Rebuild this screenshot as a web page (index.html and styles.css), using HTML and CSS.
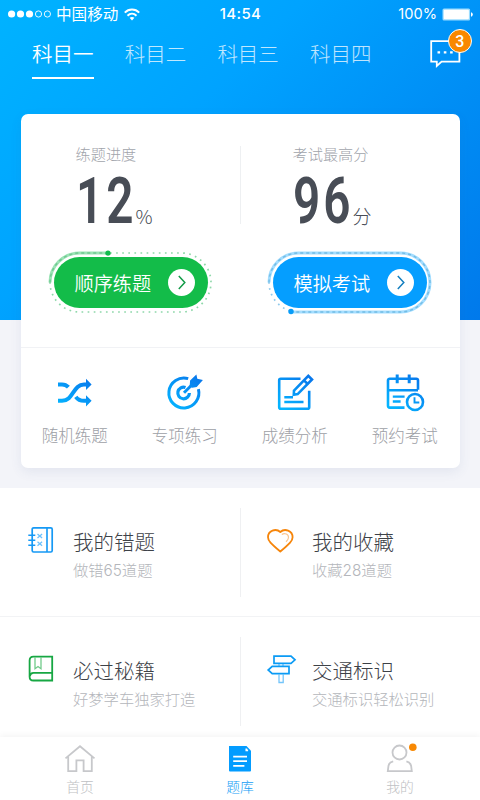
FILE: index.html
```html
<!DOCTYPE html>
<html lang="zh-CN">
<head>
<meta charset="utf-8">
<title>题库</title>
<link rel="stylesheet" href="styles.css">
</head>
<body>
<svg class="defs" width="0" height="0"><defs>
<linearGradient id="blue" gradientUnits="userSpaceOnUse" x1="32" y1="4" x2="8" y2="36"><stop offset="0" stop-color="#0878ec"/><stop offset="1" stop-color="#05b4ff"/></linearGradient>
</defs></svg>
<div class="app">
  <header class="hero">
    <div class="status">
      <div class="carrier">
        <svg width="44" height="10" viewBox="0 0 44 10"><g fill="#fff"><circle cx="3.6" cy="5" r="3.6"/><circle cx="12.5" cy="5" r="3.6"/><circle cx="21.5" cy="5" r="3.6"/></g><g fill="none" stroke="#fff" stroke-width=".9"><circle cx="30.5" cy="5" r="3.1"/><circle cx="39.4" cy="5" r="3.1"/></g></svg>
        <span>中国移动</span>
        <svg class="wifi" width="16" height="13" viewBox="0 0 16 13"><g fill="none" stroke="#fff" stroke-width="2"><path d="M.8 4.6C4.8.5 11.2.5 15.2 4.6"/><path d="M3.5 7.7c2.6-2.5 6.4-2.5 9 0"/></g><path d="M5.6 9.8c1.4-1.2 3.4-1.2 4.8 0L8 12.4z" fill="#fff"/></svg>
      </div>
      <span class="time">14:54</span>
      <div class="battery"><span>100%</span>
        <svg width="31" height="13" viewBox="0 0 31 13"><rect x=".5" y=".5" width="27.6" height="12" rx="1.5" fill="#9bdcff"/><rect x="1.7" y="1.7" width="25.2" height="9.6" rx="1" fill="#fff"/><path d="M29 4.2q1.8.4 1.8 2.3T29 8.8z" fill="#fff"/></svg>
      </div>
    </div>
    <nav class="subjects">
      <span class="subject active">科目一</span><span class="subject">科目二</span><span class="subject">科目三</span><span class="subject">科目四</span>
      <div class="message">
        <svg width="32" height="28" viewBox="0 0 32 28"><path d="M1.2 1.2h28.2v20.5H11.6L6.8 26v-4.3H1.2z" fill="none" stroke="#fff" stroke-width="1.8"/><path d="M7.5 11.2h2.6v2.4H7.5zM13.8 11.2h2.6v2.4h-2.6zM20.1 11.2h2.6v2.4h-2.6z" fill="#fff"/></svg>
        <b class="badge">3</b>
      </div>
    </nav>
  </header>

  <section class="card">
    <div class="stats">
      <div class="stat">
        <div class="label">练题进度</div>
        <div class="value"><b>12</b><i>%</i></div>
      </div>
      <div class="stat right">
        <div class="label">考试最高分</div>
        <div class="value"><b>96</b><i>分</i></div>
      </div>
    </div>
    <div class="actions">
      <div class="ring green">
        <svg class="track" width="163" height="61" viewBox="0 0 163 61" fill="none"><rect x="1" y="1" width="161" height="59" rx="29.5" stroke="#8fd8aa" stroke-width="1.7" stroke-dasharray="1.7 4.4"/><path d="M1 30.5A29.5 29.5 0 0 1 30.5 1H59" stroke="#9be3b5" stroke-width="3"/><path d="M1 30.5A29.5 29.5 0 0 1 30.5 1H59" stroke="#6fc890" stroke-width="1.4" stroke-dasharray="3 3"/><circle cx="59" cy="1.2" r="2.6" fill="#11bc4d"/></svg>
        <div class="pill"><span>顺序练题</span><svg width="27" height="27" viewBox="0 0 27 27"><circle cx="13.5" cy="13.5" r="13.5" fill="#fff"/><path d="M10.8 7l6 6.5-6 6.5" fill="none" stroke="#139b48" stroke-width="1.5"/></svg></div>
      </div>
      <div class="ring blue">
        <svg class="track" width="163" height="61" viewBox="0 0 163 61" fill="none"><rect x="1" y="1" width="161" height="59" rx="29.5" stroke="#8fc9ec" stroke-width="1.7" stroke-dasharray="1.7 4.4"/><path d="M1 30.5A29.5 29.5 0 0 1 30.5 1h102a29.5 29.5 0 0 1 0 59H23" stroke="#a3ddff" stroke-width="3"/><path d="M1 30.5A29.5 29.5 0 0 1 30.5 1h102a29.5 29.5 0 0 1 0 59H23" stroke="#73bce4" stroke-width="1.4" stroke-dasharray="3 3"/><circle cx="23" cy="59.5" r="2.7" fill="#079cf8"/></svg>
        <div class="pill"><span>模拟考试</span><svg width="27" height="27" viewBox="0 0 27 27"><circle cx="13.5" cy="13.5" r="13.5" fill="#fff"/><path d="M10.8 7l6 6.5-6 6.5" fill="none" stroke="#147fbf" stroke-width="1.5"/></svg></div>
      </div>
    </div>
    <div class="tools">
      <div class="tool">
        <svg width="40" height="40" viewBox="0 0 40 40"><g fill="none" stroke="url(#blue)" stroke-width="4"><path d="M3 12.4h4c2.8 0 4.8 1.1 6.4 2.8M3 28.8h4C18.5 28.8 18 12.4 29 12.4h3M20.8 24.8c2 2.8 4.7 4 8.2 4h3"/></g><path d="M31 6.8l5.6 5.6-5.6 5.6zM31 23.2l5.6 5.6-5.6 5.6z" fill="url(#blue)"/></svg>
        <span>随机练题</span>
      </div>
      <div class="tool">
        <svg width="40" height="40" viewBox="0 0 40 40"><g fill="none" stroke="url(#blue)" stroke-width="3"><path d="M23.2 6.6A15 15 0 1 0 33.4 17.2"/><path d="M20.5 15.5A5.8 5.8 0 1 0 24.4 21" stroke-width="3.2"/><path d="M19 20.8l8-8"/></g><path d="M24.6 14.8l.5-6.2 6.3-6 .9 4.2 5.6 1.3-6.2 6.8-4.4.9z" fill="url(#blue)"/></svg>
        <span>专项练习</span>
      </div>
      <div class="tool">
        <svg width="40" height="40" viewBox="0 0 40 40"><g fill="none" stroke="url(#blue)" stroke-width="2.6"><path d="M25.5 6.7H5.7q-1.5 0-1.5 1.5v27q0 1.5 1.5 1.5h27q1.5 0 1.5-1.5V18.8"/><path d="M19 18.6L33.3 3.8l3.7 3.7-14.3 14.6-3.9.6zM29 8.3l3.7 3.7"/><path d="M9.3 25.2H18M9.3 30h19.2"/></g></svg>
        <span>成绩分析</span>
      </div>
      <div class="tool">
        <svg width="40" height="40" viewBox="0 0 40 40"><g fill="none" stroke="url(#blue)" stroke-width="2.6"><path d="M19.5 35.6H4.8q-1.8 0-1.8-1.8V8.3Q3 6.7 4.8 6.7h26.4q1.8 0 1.8 1.6v9.4M3 18.2h30"/><path d="M12.2 2.5v8.8M24.2 2.5v8.8" stroke-width="3"/><path d="M7.8 24.6h11.8M7.8 29.5h7.8" stroke-width="2.4"/><circle cx="30" cy="30" r="8"/><path d="M29.5 25.2v5.3h4.8" stroke-width="1.9"/></g></svg>
        <span>预约考试</span>
      </div>
    </div>
  </section>

  <main class="entries">
    <div class="entry">
      <svg width="30" height="30" viewBox="0 0 30 30" fill="none" stroke="#1699f5"><rect x="5.2" y="1.8" width="20" height="24.2" rx="1.4" stroke-width="1.7"/><path d="M20 2v24M1.3 9.3h7M1.3 14.2h7M1.3 19.2h7" stroke-width="1.6"/><path d="M10.5 8l4.6 4m0-4l-4.6 4M10.5 15.7l4.6 4m0-4l-4.6 4" stroke="#6ec1fb" stroke-width="1.3"/></svg>
      <div><h2>我的错题</h2><p>做错65道题</p></div>
    </div>
    <div class="entry">
      <svg width="30" height="30" viewBox="0 0 30 30" fill="none"><path d="M14.3 6C9.8 1.9 2 4.7 2 11.2c0 3.4 2.6 6.2 12.3 14.3C24 17.4 26.6 14.6 26.6 11.2 26.6 4.7 18.8 1.9 14.3 6z" stroke="#f6850a" stroke-width="1.8" stroke-linejoin="round"/><path d="M15.8 8.4c3-1.9 7-.3 6.7 3.3-.2 1.7-1.3 2.9-2.5 4" stroke="#fac48e" stroke-width="1.2"/></svg>
      <div><h2>我的收藏</h2><p>收藏28道题</p></div>
    </div>
    <div class="entry">
      <svg width="30" height="30" viewBox="0 0 30 30" fill="none" stroke="#17a743"><path d="M25.2 1.7H6.4Q2.6 1.7 2.6 5.5v16.2q0 3.8 3.8 3.8h18.8zM2.9 21.2q.4-3.4 3.6-3.4h18.7" stroke-width="1.8"/><path d="M8 2v11.8l3-2.2 3 2.2V2" stroke="#72cb8b" stroke-width="1.3"/></svg>
      <div><h2>必过秘籍</h2><p>好梦学车独家打造</p></div>
    </div>
    <div class="entry">
      <svg width="30" height="30" viewBox="0 0 30 30" fill="none"><path d="M13 8.5v3.2m4-3.2v3.2M13 19.5v8h4.2v-8" stroke="#74c5fa" stroke-width="1.3"/><path d="M8 1.2h17l4 3.6-4 3.6H8zM23 11.4H6.2L2.2 15l4 3.6H23z" stroke="#0b9bf5" stroke-width="1.7"/></svg>
      <div><h2>交通标识</h2><p>交通标识轻松识别</p></div>
    </div>
  </main>

  <footer class="tabbar">
    <div class="tab"><svg width="32" height="30" viewBox="0 0 32 30" fill="none" stroke="#c7c8cb" stroke-width="1.8"><path d="M1.5 14.4L16 2.2l14.5 12.2M4.2 12.5v14.7h8.2V16.4h7.2v10.8h8.2V12.5"/></svg><span>首页</span></div>
    <div class="tab on"><svg width="32" height="30" viewBox="0 0 32 30"><path d="M5 2h17.5L27 6.8v19.8q0 1-1 1H6q-1 0-1-1z" fill="#039cff"/><path d="M22.3 4.6V6.4h1.8M9.2 12.7H23M9.2 17.1H23M9.2 21.9h11.2" fill="none" stroke="#fff" stroke-width="1.7"/></svg><span>题库</span></div>
    <div class="tab"><svg width="32" height="30" viewBox="0 0 32 30" fill="none" stroke="#c7c8cb" stroke-width="1.8"><circle cx="15.5" cy="8.5" r="7"/><path d="M9.2 17.3q-4 1-4.7 4.4l-.7 5.5h24l-.7-5.5q-.8-3.4-4.7-4.4"/><circle cx="28.8" cy="3.2" r="3.8" fill="#f88904" stroke="none"/></svg><span>我的</span></div>
  </footer>
</div>
</body>
</html>
```
FILE: styles.css
```css
* { box-sizing: border-box; }
body {
  margin: 0;
  font-family: Inter, "Noto Sans CJK SC", sans-serif;
  font-weight: 300;
}
h2, p { margin: 0; font-weight: 300; }
svg { display: block; flex: none; overflow: visible; }
.defs { position: absolute; }
.app {
  width: 480px;
  height: 800px;
  overflow: hidden;
  display: flex;
  flex-direction: column;
  background: #f3f4f9;
}

.hero {
  flex: none;
  height: 320px;
  color: #fff;
  background: linear-gradient(135deg, #00b3ff 0%, #00a3ff 38%, #0079eb 100%);
}
.status {
  height: 28px;
  padding: 0 7px 0 8px;
  display: grid;
  grid-template-columns: 1fr auto 1fr;
  align-items: center;
  font-size: 15.6px;
  font-weight: 400;
  line-height: 28px;
}
.carrier, .battery { display: flex; align-items: center; height: 28px; }
.carrier span { margin-left: 4px; padding-top: 2px; }
.wifi { margin-left: 6px; }
.time { font-size: 15px; font-weight: 500; letter-spacing: .4px; }
.battery { justify-content: flex-end; gap: 5px; font-size: 14.6px; }
.subjects {
  height: 52px;
  padding-left: 32px;
  display: flex;
  gap: 31px;
  font-size: 20.5px;
  line-height: 54px;
}
.subject { width: 61.7px; height: 51px; white-space: nowrap; opacity: .75; }
.subject.active { opacity: 1; border-bottom: 2px solid #fff; font-weight: 350; }
.message { position: relative; margin: 12px 0 0 27px; height: 28px; }
.badge {
  position: absolute;
  left: 18px;
  top: -11px;
  width: 24px;
  height: 24px;
  border: 1px solid #fff;
  border-radius: 50%;
  background: #f98800;
  font-family: Roboto, sans-serif;
  font-size: 16px;
  font-weight: 500;
  line-height: 24px;
  text-align: center;
}

.card {
  flex: none;
  position: relative;
  width: 439px;
  height: 354px;
  margin: -206px 0 20px 20.5px;
  border-radius: 7px;
  background: #fff;
  box-shadow: 0 4px 12px rgba(65, 85, 145, .09);
}
.stats { height: 138px; padding-top: 32px; display: grid; grid-template-columns: 220px 219px; }
.stat { height: 78px; padding-left: 55px; }
.stat.right { padding-left: 52px; border-left: 1px solid #eef0f2; margin-left: -1px; }
.label { font-size: 15.2px; line-height: 18px; color: #a1a4ab; }
.value { height: 64px; display: flex; align-items: flex-end; color: #484d56; }
.value b {
  width: 60px;
  font-family: Roboto, sans-serif;
  font-size: 64px;
  font-weight: 600;
  line-height: 52px;
  height: 52px;
  letter-spacing: 4px;
  transform: scaleX(.745);
  transform-origin: 0 50%;
}
.value i { font-family: "Noto Sans CJK SC", sans-serif; font-weight: 200; font-style: normal; font-size: 19px; line-height: 24px; height: 24px; }
.actions { height: 95px; padding-left: 28px; display: flex; gap: 56px; }
.ring { position: relative; width: 163px; height: 61px; padding: 5px; }
.track { position: absolute; left: 0; top: 0; }
.pill {
  width: 154px;
  height: 51px;
  padding: 0 13px 0 21px;
  border-radius: 26px;
  display: flex;
  align-items: center;
  justify-content: space-between;
  color: #fff;
  font-size: 19.2px;
  font-weight: 350;
}
.green .pill { background: #13bc49; }
.blue .pill { background: #059eff; }
.tools {
  height: 121px;
  padding-top: 24px;
  border-top: 1px solid #f1f2f5;
  display: grid;
  grid-template-columns: repeat(4, 110px);
}
.tool { display: flex; flex-direction: column; align-items: center; font-size: 16.5px; color: #9da0a6; margin-left: -1.5px; }
.tool span { line-height: 24px; margin-top: 12px; }

.entries {
  flex: none;
  height: 249px;
  display: grid;
  grid-template-columns: 240px 240px;
  grid-template-rows: 129px 128px;
  background: #fff;
}
.entry { position: relative; display: flex; padding: 38px 0 0 27px; gap: 16px; border-bottom: 1px solid #f2f3f5; }
.entry > div { padding-top: 2px; }
.entry:nth-child(even) { padding-left: 26px; }
.entry:nth-child(even)::before {
  content: "";
  position: absolute;
  left: 0;
  top: 20px;
  width: 1px;
  height: 89px;
  background: #eff0f2;
}
.entry h2 { font-size: 20.5px; line-height: 30px; color: #3d4147; white-space: nowrap; }
.entry p { font-size: 15.3px; line-height: 26px; color: #b4b6bb; white-space: nowrap; }

.tabbar {
  flex: none;
  position: relative;
  height: 63px;
  display: grid;
  grid-template-columns: repeat(3, 160px);
  background: #fff;
  box-shadow: 0 -2px 6px rgba(0, 0, 0, .045);
}
.tab { display: flex; flex-direction: column; align-items: center; padding-top: 7px; color: #c0c1c4; font-size: 13.8px; }
.tab span { line-height: 20px; margin-top: 3px; }
.on { color: #159df5; }
```
